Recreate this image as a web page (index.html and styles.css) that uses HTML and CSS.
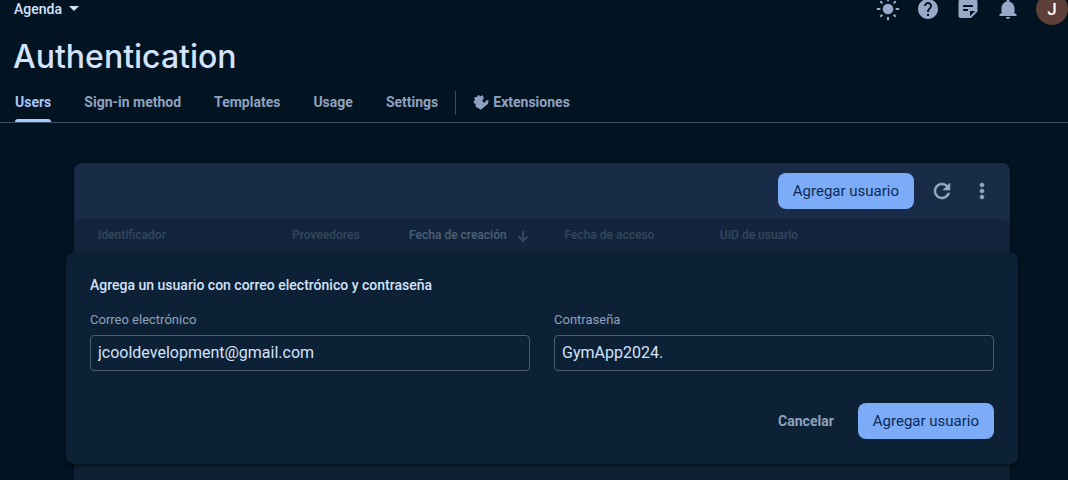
FILE: index.html
```html
<!DOCTYPE html>
<html lang="es">
<head>
<meta charset="utf-8">
<title>Authentication</title>
<link rel="stylesheet" href="styles.css">
</head>
<body>
<header class="topbar">
  <button class="project" type="button">Agenda
    <svg class="caret" viewBox="0 0 10 5" aria-hidden="true"><path d="M0 0h10L5 5z"/></svg>
  </button>
  <div class="actions">
    <button class="icon-btn" type="button" aria-label="Tema">
      <svg viewBox="0 0 24 24"><circle cx="12" cy="12" r="5.300"/><path d="M11 .8h2v3.500h-2zM11 19.700h2v3.500h-2zM.8 11h3.500v2H.8zM19.700 11h3.500v2h-3.500zM4.900 3.500l2.200 2.200-1.400 1.400-2.200-2.200zM18.300 16.900l2.200 2.200-1.400 1.400-2.200-2.200zM19.100 3.500l1.400 1.400-2.200 2.200-1.400-1.400zM5.700 16.900l1.400 1.400-2.200 2.200-1.400-1.400z"/></svg>
    </button>
    <button class="icon-btn" type="button" aria-label="Ayuda">
      <svg viewBox="0 0 24 24"><path d="M12 2C6.480 2 2 6.480 2 12s4.480 10 10 10 10-4.480 10-10S17.520 2 12 2zm1 17h-2v-2h2v2zm2.070-7.750l-.9.920C13.450 12.900 13 13.500 13 15h-2v-.5c0-1.100.45-2.100 1.170-2.830l1.240-1.260c.37-.36.590-.86.590-1.410 0-1.100-.9-2-2-2s-2 .9-2 2H8c0-2.210 1.790-4 4-4s4 1.790 4 4c0 .88-.36 1.680-.93 2.250z"/></svg>
    </button>
    <button class="icon-btn" type="button" aria-label="Notas de la versión">
      <svg viewBox="0 0 24 24"><path fill-rule="evenodd" d="M4.500 2.500h15a2 2 0 0 1 2 2V14.500l-6.500 6.500H4.500a2 2 0 0 1-2-2V4.500a2 2 0 0 1 2-2zM7 8v2h10V8zM7 12v2h5v-2zM14 14v5.200l5.200-5.200z"/></svg>
    </button>
    <button class="icon-btn" type="button" aria-label="Notificaciones">
      <svg viewBox="0 0 24 24"><path d="M12 22c1.100 0 2-.9 2-2h-4c0 1.100.89 2 2 2zm6.500-6v-5c0-3.070-2.140-5.640-5-6.320V4c0-.83-.67-1.500-1.500-1.500s-1.500.67-1.500 1.500v.68C7.630 5.360 5.500 7.920 5.500 11v5l-2 1.500V19h17v-1.500z"/></svg>
    </button>
    <button class="avatar" type="button" aria-label="Cuenta de J">J</button>
  </div>
</header>

<h1 class="title">Authentication</h1>

<nav class="tabs">
  <a class="tab tab-active" href="#users">Users</a>
  <a class="tab" href="#sign-in">Sign-in method</a>
  <a class="tab" href="#templates">Templates</a>
  <a class="tab" href="#usage">Usage</a>
  <a class="tab" href="#settings">Settings</a>
  <span class="divider"></span>
  <a class="tab tab-ext" href="#extensions">
    <svg class="ext-icon" viewBox="0 0 16 16" aria-hidden="true"><path d="M1.200 3.200L4.200 3C4 .8 6.500.6 7 2.400L9.800 1.200 10.800 4.600C9 5.600 8.900 8.600 11.400 8.400 13.200 8.100 13 5.900 13 5.900L15.600 6.500 15 9.800 8 15.700 2.400 12.600 2.800 9.800C0 9.800 0 6.900 2 6.500z"/></svg>
    Extensiones
  </a>
</nav>

<main class="content">
  <section class="card">
    <div class="toolbar">
      <button class="btn-primary" type="button">Agregar usuario</button>
      <button class="icon-btn tool-btn" type="button" aria-label="Actualizar">
        <svg viewBox="0 0 24 24"><path stroke="currentColor" stroke-width=".5" d="M17.650 6.350C16.200 4.900 14.210 4 12 4c-4.420 0-7.990 3.580-7.990 8s3.570 8 7.990 8c3.730 0 6.840-2.550 7.730-6h-2.080c-.82 2.330-3.040 4-5.650 4-3.310 0-6-2.690-6-6s2.690-6 6-6c1.660 0 3.140.69 4.220 1.780L13 11h7V4l-2.350 2.350z"/></svg>
      </button>
      <button class="icon-btn tool-btn" type="button" aria-label="Más opciones">
        <svg viewBox="0 0 24 24"><path stroke="currentColor" stroke-width=".5" d="M12 8c1.100 0 2-.9 2-2s-.9-2-2-2-2 .9-2 2 .9 2 2 2zm0 2c-1.100 0-2 .9-2 2s.9 2 2 2 2-.9 2-2-.9-2-2-2zm0 6c-1.100 0-2 .9-2 2s.9 2 2 2 2-.9 2-2-.9-2-2-2z"/></svg>
      </button>
    </div>
    <div class="card-body">
      <table class="users">
        <colgroup><col class="col-id"><col class="col-providers"><col class="col-date"><col class="col-date"><col></colgroup>
        <thead>
          <tr>
            <th>Identificador</th>
            <th>Proveedores</th>
            <th class="sorted">Fecha de creación <svg class="sort-icon" viewBox="0 0 12 12" aria-hidden="true"><path d="M6 1v10M1.500 6.500L6 11l4.500-4.500"/></svg></th>
            <th>Fecha de acceso</th>
            <th>UID de usuario</th>
          </tr>
        </thead>
      </table>
      <form class="dialog">
        <h2 class="dialog-title">Agrega un usuario con correo electrónico y contraseña</h2>
        <div class="fields">
          <div class="field">
            <label for="email">Correo electrónico</label>
            <input id="email" type="text" value="jcooldevelopment@gmail.com">
          </div>
          <div class="field">
            <label for="password">Contraseña</label>
            <input id="password" type="text" value="GymApp2024.">
          </div>
        </div>
        <div class="dialog-actions">
          <button class="btn-text" type="button">Cancelar</button>
          <button class="btn-primary" type="submit">Agregar usuario</button>
        </div>
      </form>
    </div>
  </section>
</main>
</body>
</html>
```
FILE: styles.css
```css
* { box-sizing: border-box; }

html { height: 100%; }

body {
  margin: 0;
  min-height: 100%;
  display: flex;
  flex-direction: column;
  background: #021322;
  color: #d3e3fd;
  font: 500 14px/20px Roboto, sans-serif;
  overflow: hidden;
}

button {
  border: 0;
  padding: 0;
  background: none;
  color: inherit;
  font: inherit;
  cursor: pointer;
}

.topbar {
  display: flex;
  align-items: center;
  justify-content: space-between;
  height: 17px;
  padding-left: 14px;
}

.project {
  display: flex;
  align-items: center;
  gap: 7px;
  line-height: 16px;
}

.caret {
  width: 10px;
  height: 5px;
  fill: currentColor;
}

.actions {
  display: flex;
  align-items: center;
  gap: 16px;
}

.icon-btn {
  display: block;
  width: 24px;
  height: 24px;
  color: #98a9c7;
}

.icon-btn svg {
  display: block;
  width: 24px;
  height: 24px;
  fill: currentColor;
}

.avatar {
  width: 32px;
  height: 32px;
  border-radius: 50%;
  background: #5d4037;
  color: #fff;
  font-size: 17px;
  line-height: 14px;
}

.title {
  margin: 20px 13px 0;
  font: 500 32px/40px Inter, sans-serif;
}

.tabs {
  display: flex;
  align-items: center;
  gap: 33px;
  height: 46px;
  padding: 7px 15px 0;
  border-bottom: 1px solid #3d4c60;
}

.tab {
  position: relative;
  display: flex;
  align-items: center;
  align-self: stretch;
  padding-bottom: 2px;
  color: #8fa1bf;
  font-weight: 700;
  text-decoration: none;
}

.tab-active { color: #a8c7fa; }

.tab-active::after {
  content: "";
  position: absolute;
  inset: auto 0 0;
  height: 3px;
  border-radius: 3px 3px 0 0;
  background: #a8c7fa;
}

.divider {
  width: 1px;
  height: 24px;
  margin: 0 -16px;
  background: #3d4c60;
}

.tab-ext { gap: 4px; }

.ext-icon {
  width: 16px;
  height: 16px;
  fill: currentColor;
}

.content {
  flex: 1;
  display: flex;
  flex-direction: column;
  padding: 40px 58px 0 74px;
}

.card {
  flex: 1;
  border-radius: 8px 8px 0 0;
  background: #182c47;
  display: flex;
  flex-direction: column;
  box-shadow: 0 1px 3px #000a;
}

.toolbar {
  display: flex;
  align-items: center;
  justify-content: flex-end;
  gap: 16px;
  height: 56px;
  padding: 0 16px;
}

.btn-primary {
  height: 36px;
  padding: 0 15px;
  border-radius: 8px;
  background: #7cacf8;
  color: #0a2a57;
  font-size: 15px;
  font-weight: 400;
}

.card-body {
  flex: 1;
  padding-bottom: 15px;
  border-radius: 8px 8px 0 0;
  background: #0d2034;
}

.users {
  width: 100%;
  table-layout: fixed;
  border-collapse: collapse;
  border-radius: 8px 8px 0 0;
  background: #12253c;
}

.col-id { width: 23.3%; }
.col-providers { width: 12.5%; }
.col-date { width: 16.6%; }

.users th {
  height: 33px;
  padding: 0 0 2px;
  color: #33475e;
  font-size: 12px;
  line-height: 16px;
  font-weight: 500;
  text-align: left;
}

.users th:first-child { padding-left: 24px; }
.users .sorted { color: #4c6078; }

.sort-icon {
  width: 12px;
  height: 12px;
  margin-left: 7px;
  vertical-align: -3px;
  fill: none;
  stroke: #33475e;
  stroke-width: 2;
}

.dialog {
  margin: 0 -8px;
  padding: 24px 24px 25px;
  border-radius: 8px;
  background: #0d2136;
  box-shadow: 0 1px 4px #0009;
}

.dialog-title {
  margin: 0 0 16px;
  font-size: 14px;
  line-height: 18px;
  font-weight: 500;
}

.fields {
  display: grid;
  grid-template-columns: 1fr 1fr;
  gap: 24px;
}

.field label {
  display: block;
  margin-bottom: 5px;
  color: #8fa1bf;
  font-size: 13px;
  font-weight: 400;
}

.field input {
  display: block;
  width: 100%;
  height: 36px;
  padding: 0 7px 2px;
  border: 1px solid #4b5b70;
  border-radius: 4px;
  background: transparent;
  color: #d3e3fd;
  font: 400 16px/24px Roboto, sans-serif;
}

.dialog-actions {
  display: flex;
  justify-content: flex-end;
  gap: 24px;
  margin-top: 32px;
}

.btn-text {
  color: #8fa1bf;
  font-weight: 700;
}
```
